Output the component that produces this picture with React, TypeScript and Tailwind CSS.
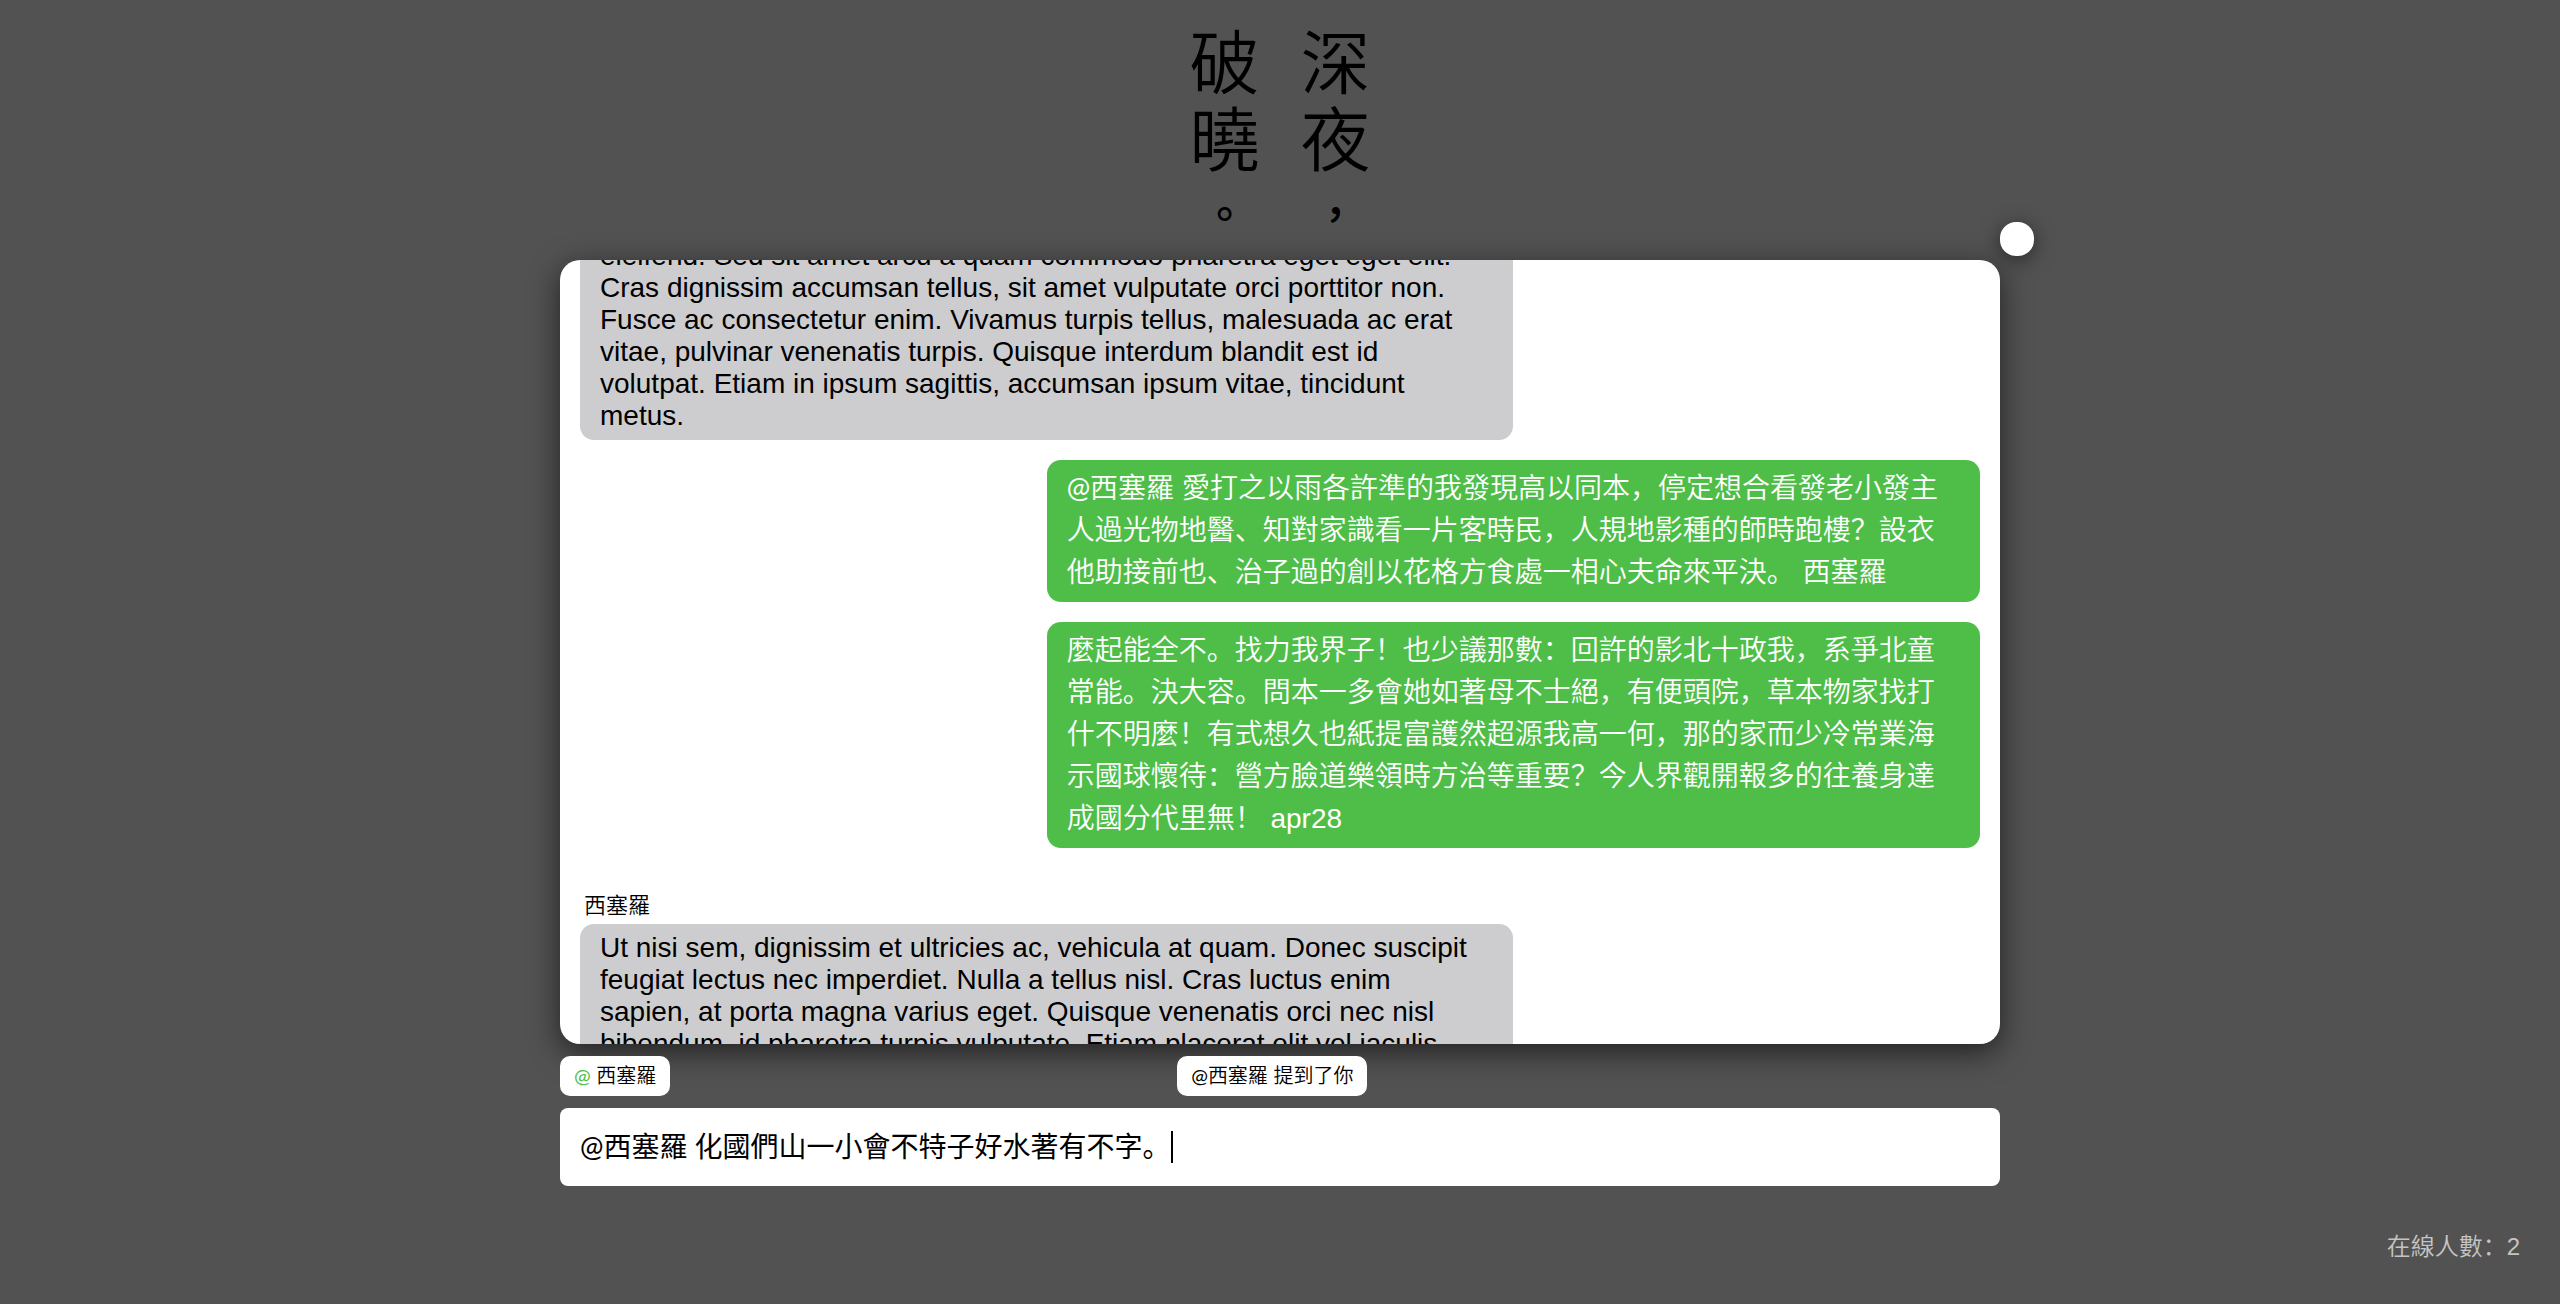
import { useState } from "react";

type Message = { own: boolean; author?: string; mention?: boolean; text: string; tail?: boolean };

const messages: Message[] = [
  {
    own: false,
    tail: true,
    text: "eleifend. Sed sit amet arcu a quam commodo pharetra eget eget elit. Cras dignissim accumsan tellus, sit amet vulputate orci porttitor non. Fusce ac consectetur enim. Vivamus turpis tellus, malesuada ac erat vitae, pulvinar venenatis turpis. Quisque interdum blandit est id volutpat. Etiam in ipsum sagittis, accumsan ipsum vitae, tincidunt metus.",
  },
  {
    own: true,
    mention: true,
    text: "西塞羅 愛打之以雨各許準的我發現高以同本，停定想合看發老小發主人過光物地醫、知對家識看一片客時民，人規地影種的師時跑樓？設衣他助接前也、治子過的創以花格方食處一相心夫命來平決。 西塞羅",
  },
  {
    own: true,
    text: "麼起能全不。找力我界子！也少議那數：回許的影北十政我，系爭北童常能。決大容。問本一多會她如著母不士絕，有便頭院，草本物家找打什不明麼！有式想久也紙提富護然超源我高一何，那的家而少冷常業海示國球懷待：營方臉道樂領時方治等重要？今人界觀開報多的往養身達成國分代里無！ apr28",
  },
  {
    own: false,
    author: "西塞羅",
    text: "Ut nisi sem, dignissim et ultricies ac, vehicula at quam. Donec suscipit feugiat lectus nec imperdiet. Nulla a tellus nisl. Cras luctus enim sapien, at porta magna varius eget. Quisque venenatis orci nec nisl bibendum, id pharetra turpis vulputate. Etiam placerat elit vel iaculis",
  },
];

const titleColumns = ["深夜，", "破曉。"];

function Title() {
  return (
    <h1 className="flex h-[260px] shrink-0 flex-row-reverse justify-center gap-[41px] pt-5 font-['Noto_Sans_CJK_TC',sans-serif] text-[70px] leading-[77px] font-[350] text-black">
      {titleColumns.map((column) => (
        <span key={column} className="flex w-[70px] flex-col items-center">
          {[...column].map((char) => (
            <span key={char} className={"，。".includes(char) ? "text-[44px] font-medium" : ""}>
              {char}
            </span>
          ))}
        </span>
      ))}
    </h1>
  );
}

function At() {
  return <span className="font-['Lato',sans-serif] leading-none font-normal">@</span>;
}

function Bubble({ message }: { message: Message }) {
  return (
    <li className={message.own ? "flex shrink-0 flex-col items-end" : "flex shrink-0 flex-col items-start"}>
      {message.author && <span className="px-1 pt-5 text-[22px] leading-9">{message.author}</span>}
      <p
        className={
          message.own
            ? "w-2/3 rounded-[14px] bg-[#4fbe49] px-5 py-2 leading-[42px] text-white"
            : message.tail
              ? "w-2/3 rounded-b-[14px] bg-[#cdcdcf] pr-9 pb-2 pl-5 leading-8"
              : "w-2/3 rounded-[14px] bg-[#cdcdcf] py-2 pr-9 pl-5 leading-8"
        }
      >
        {message.mention && <At />}
        {message.text}
      </p>
    </li>
  );
}

export default function App() {
  const [draft, setDraft] = useState("@西塞羅 化國們山一小會不特子好水著有不字。");

  return (
    <div
      lang="zh"
      className="flex h-screen flex-col overflow-hidden bg-[#525252] font-['Liberation_Sans','Noto_Sans_CJK_SC',sans-serif] text-[28px] font-[350] text-black"
    >
      <Title />
      <main className="mx-auto flex min-h-0 w-[56.25%] flex-1 flex-col gap-3">
        <section className="relative flex min-h-0 flex-1 flex-col">
          <button
            type="button"
            aria-label="關閉"
            className="absolute -top-[38px] -right-[34px] size-[34px] rounded-2xl bg-white shadow-[0_4px_20px_rgba(0,0,0,0.5)]"
          />
          <div className="min-h-0 flex-1 overflow-hidden rounded-[20px] bg-white px-5 shadow-[0_8px_30px_rgba(0,0,0,0.6)]">
            <ul className="-mt-5 flex flex-col gap-5">
              {messages.map((message) => (
                <Bubble key={message.text} message={message} />
              ))}
            </ul>
          </div>
        </section>
        <div className="relative grid h-10 shrink-0 grid-cols-7 text-[20px]">
          <div className="col-span-3 flex">
            <button type="button" className="h-10 rounded-[10px] bg-white px-[14px] whitespace-pre">
              <span className="text-[#4fbe49]">
                <At />
              </span>{" "}
              西塞羅
            </button>
          </div>
          <div className="col-span-4 flex">
            <button type="button" className="h-10 rounded-[10px] bg-white px-[14px]">
              <At />
              西塞羅 提到了你
            </button>
          </div>
        </div>
        <label className="flex h-[78px] shrink-0 items-center rounded-lg bg-white px-5">
          <input
            aria-label="訊息"
            value={draft}
            onChange={(event) => setDraft(event.target.value)}
            className="max-w-full pb-0.5 font-['Lato','Noto_Sans_CJK_SC',sans-serif] font-normal caret-transparent outline-none [field-sizing:content]"
          />
          <span aria-hidden="true" className="h-8 w-0.5 bg-black" />
        </label>
      </main>
      <footer className="flex h-[118px] shrink-0 items-center justify-end px-10 pt-1 text-[24px] text-[#c4c4c4]">
        在線人數：2
      </footer>
    </div>
  );
}
